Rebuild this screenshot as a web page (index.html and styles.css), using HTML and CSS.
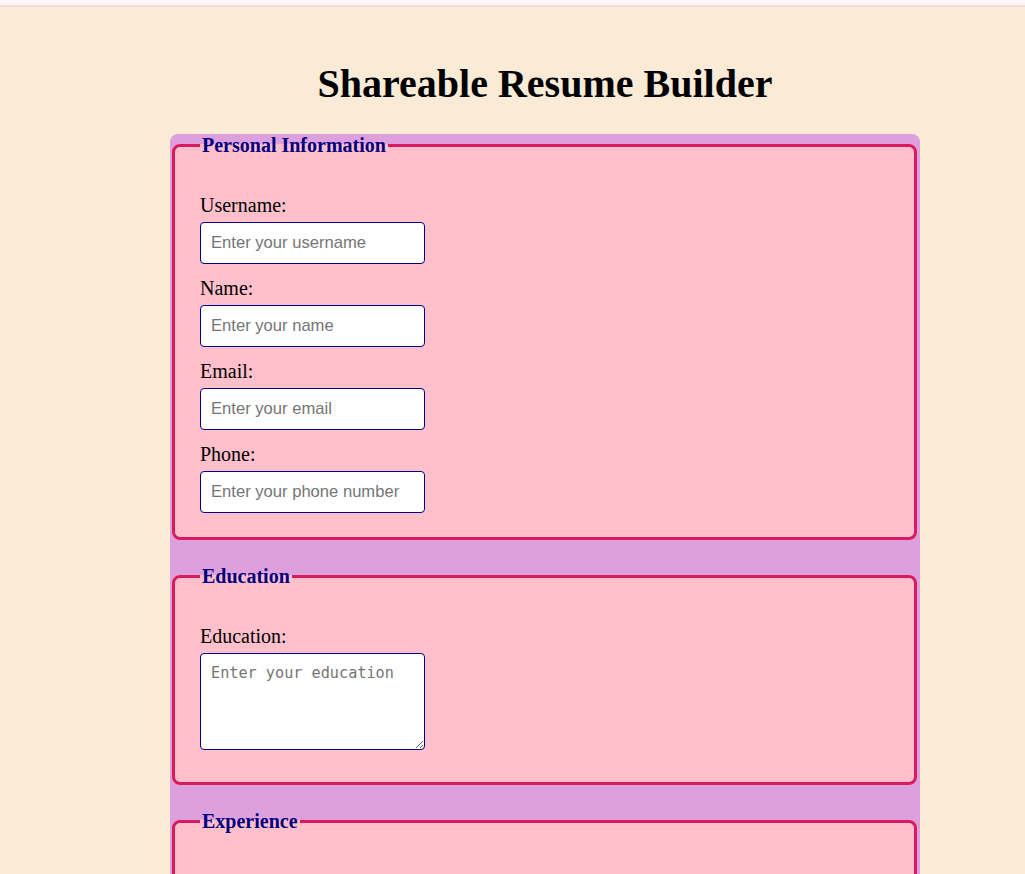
FILE: index.html
```html
<!DOCTYPE html>
<html lang="en">
<head>
<meta charset="utf-8">
<title>Shareable Resume Builder</title>
<link rel="stylesheet" href="styles.css">
</head>
<body>
<div class="topbar"></div>
<main class="page">
  <h1 class="title">Shareable Resume Builder</h1>
  <form class="resume-form">
    <fieldset class="section">
      <legend class="section-title">Personal Information</legend>
      <div class="field">
        <label class="field-label" for="username">Username:</label>
        <input class="text-input" id="username" type="text" placeholder="Enter your username">
      </div>
      <div class="field">
        <label class="field-label" for="name">Name:</label>
        <input class="text-input" id="name" type="text" placeholder="Enter your name">
      </div>
      <div class="field">
        <label class="field-label" for="email">Email:</label>
        <input class="text-input" id="email" type="email" placeholder="Enter your email">
      </div>
      <div class="field">
        <label class="field-label" for="phone">Phone:</label>
        <input class="text-input" id="phone" type="tel" placeholder="Enter your phone number">
      </div>
    </fieldset>
    <fieldset class="section">
      <legend class="section-title">Education</legend>
      <div class="field">
        <label class="field-label" for="education">Education:</label>
        <textarea class="text-area" id="education" placeholder="Enter your education"></textarea>
      </div>
    </fieldset>
    <fieldset class="section">
      <legend class="section-title">Experience</legend>
      <div class="field">
        <label class="field-label" for="experience">Experience:</label>
        <textarea class="text-area" id="experience" placeholder="Enter your experience"></textarea>
      </div>
    </fieldset>
    <fieldset class="section">
      <legend class="section-title">Skills</legend>
      <div class="field">
        <label class="field-label" for="skills">Skills:</label>
        <textarea class="text-area" id="skills" placeholder="Enter your skills"></textarea>
      </div>
    </fieldset>
  </form>
</main>
</body>
</html>
```
FILE: styles.css
```css
html, body {
  margin: 0;
  padding: 0;
}

body {
  background: #faebd7;
  font-family: "Liberation Serif", "Times New Roman", serif;
  color: #000;
}

.topbar {
  height: 5px;
  background: #fff6f5;
  border-bottom: 2px solid #f1dae0;
}

.page {
  padding: 53px 0 40px 65px;
}

.title {
  margin: 0 0 27px;
  font-size: 40px;
  font-weight: bold;
  text-align: center;
  line-height: normal;
}

.resume-form {
  width: 750px;
  margin: 0 auto;
  background: #dda0dd;
  border-radius: 8px;
  padding-bottom: 1px;
}

.section {
  margin: 0 3px 25px 2px;
  padding: 37px 25px 24px;
  border: 3px solid #d81b60;
  border-radius: 8px;
  background: #ffc0cb;
  min-width: 0;
}

.section-title {
  padding: 0 2px;
  color: #000080;
  font-size: 20px;
  font-weight: bold;
  line-height: normal;
}

.field {
  margin-bottom: 13px;
}

.field:last-child {
  margin-bottom: 0;
}

.field-label {
  display: block;
  font-size: 20px;
  line-height: 23px;
  margin-bottom: 5px;
}

.text-input {
  display: block;
  box-sizing: border-box;
  width: 225px;
  height: 42px;
  margin: 0;
  padding: 0 10px;
  border: 1px solid #000080;
  border-radius: 4px;
  background: #fff;
  font-family: "Liberation Sans", Arial, sans-serif;
  font-size: 16.6px;
  color: #000;
  outline: none;
}

.text-area {
  display: block;
  box-sizing: border-box;
  width: 225px;
  height: 97px;
  margin: 0 0 8px;
  padding: 10px;
  border: 1px solid #000080;
  border-radius: 4px;
  background: #fff;
  font-family: "DejaVu Sans Mono", monospace;
  font-size: 15.2px;
  color: #000;
  outline: none;
}

.text-input::placeholder,
.text-area::placeholder {
  color: #757575;
}
```
